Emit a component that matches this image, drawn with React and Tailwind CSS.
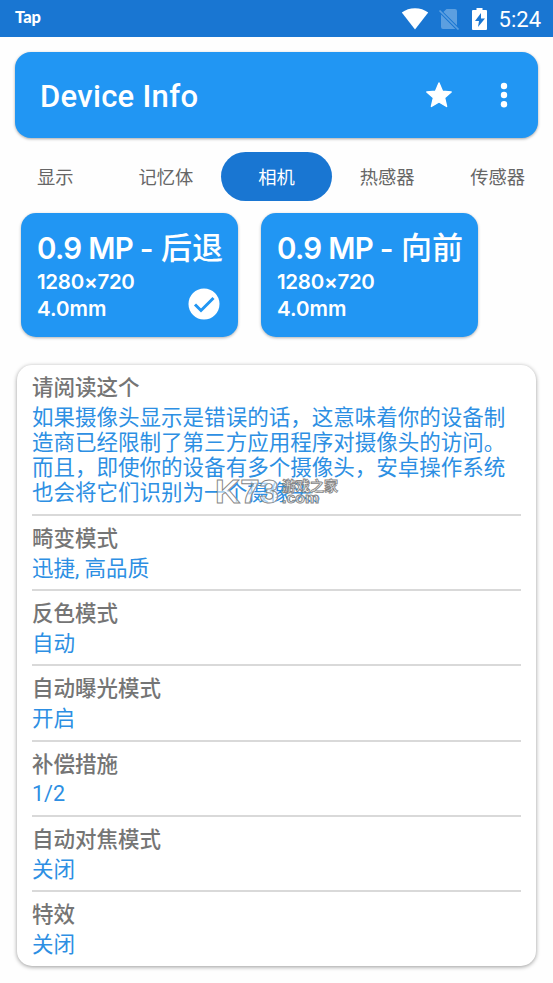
const tabs = ["显示", "记忆体", "相机", "热感器", "传感器"];

const cameras = [
  { id: 0, megapixels: "0.9 MP", facing: "后退", resolution: "1280×720", focal: "4.0mm" },
  { id: 1, megapixels: "0.9 MP", facing: "向前", resolution: "1280×720", focal: "4.0mm" },
];

const details = [
  {
    label: "请阅读这个",
    lines: [
      "如果摄像头显示是错误的话，这意味着你的设备制",
      "造商已经限制了第三方应用程序对摄像头的访问。",
      "而且，即使你的设备有多个摄像头，安卓操作系统",
      "也会将它们识别为一个摄像头。",
    ],
  },
  { label: "畸变模式", lines: ["迅捷, 高品质"] },
  { label: "反色模式", lines: ["自动"] },
  { label: "自动曝光模式", lines: ["开启"] },
  { label: "补偿措施", lines: ["1/2"] },
  { label: "自动对焦模式", lines: ["关闭"] },
  { label: "特效", lines: ["关闭"] },
];

const StatusBar = () => (
  <div className="flex h-[37px] items-center bg-[#1976d2] pl-[15px] pr-[12px] text-white">
    <svg width="27" height="18" viewBox="0 0 27 18" className="mt-px overflow-visible">
      <text x="0" y="13" textLength="26" lengthAdjust="spacingAndGlyphs" className="fill-white font-['Lato'] text-[16px] font-black">
        Tap
      </text>
    </svg>
    <div className="ml-auto flex items-center">
      <svg width="28" height="22" viewBox="0 0 28 22" fill="white">
        <path d="M.8 4.600C4.600 1.700 9 .2 14 .2s9.400 1.500 13.200 4.400L14 21.400z" />
      </svg>
      <svg width="22" height="24" viewBox="0 0 22 24" className="ml-[9px]">
        <path d="M8.500 2H17q2 0 2 2v14.600L5.400 5zM3 7.500 17.400 22H5q-2 0-2-2z" fill="#5c9fe0" />
        <path d="m1.500 3.500 19 19" stroke="#5c9fe0" strokeWidth="1.700" />
      </svg>
      <svg width="16" height="24" viewBox="0 0 16 24" className="ml-[12px]">
        <path d="M4.500 1h6v2H14q1 0 1 1v18q0 1-1 1H1q-1 0-1-1V4q0-1 1-1h3.500z" fill="white" />
        <path d="M9 6 3 14h4l-1 6 7-8.500H9z" fill="#1976d2" />
      </svg>
      <span className="ml-[11px] mt-[2px] text-[22px] leading-none">5:24</span>
    </div>
  </div>
);

const Header = () => (
  <header className="mx-[15px] mt-[15px] flex h-[86px] items-center rounded-[16px] bg-[#2196f3] pl-[25px] pr-[29px] text-white shadow-[0_1px_3px_rgba(0,0,0,0.35)]">
    <h1 className="mt-[3px] text-[31px] font-medium leading-none tracking-[0.3px]">Device Info</h1>
    <svg width="28" height="27" viewBox="0 0 28 27" className="-mt-[2px] ml-auto">
      <path
        d="m14 2 3.500 8.200 8.700.8-6.600 5.800 2 8.700L14 21l-7.600 4.500 2-8.700L1.800 11l8.700-.8z"
        fill="white"
        stroke="white"
        strokeWidth="1.400"
        strokeLinejoin="round"
      />
    </svg>
    <svg width="10" height="28" viewBox="0 0 10 28" fill="white" className="ml-[46px]">
      <circle cx="5" cy="5" r="3.200" />
      <circle cx="5" cy="14" r="3.200" />
      <circle cx="5" cy="23.300" r="3.200" />
    </svg>
  </header>
);

const CameraCard = ({ camera, selected }) => (
  <div className="flex h-[124px] w-[217px] shrink-0 rounded-[15px] bg-[#2196f3] pl-[16px] pr-[18px] pt-[16px] font-['Inter','Noto_Sans_CJK_SC',sans-serif] text-white shadow-[0_1px_3px_rgba(0,0,0,0.3)]">
    <div className="min-w-0 flex-1 whitespace-nowrap">
      <div className="flex h-[38px] items-center">
        <span className="w-[124px] shrink-0 text-[29.500px] font-semibold tracking-[-0.7px]">{camera.megapixels} -</span>
        <span className="text-[31px] font-medium">{camera.facing}</span>
      </div>
      <p className="mt-px text-[20.500px] font-semibold leading-[27px] tracking-[-0.3px]">{camera.resolution}</p>
      <p className="text-[20.500px] font-semibold leading-[27px]">{camera.focal}</p>
    </div>
    {selected && (
      <svg width="32" height="32" viewBox="0 0 32 32" className="-ml-[32px] mb-[17px] shrink-0 self-end">
        <circle cx="16" cy="16" r="15.500" fill="white" />
        <path d="m7 16.500 6 6L25.500 10" fill="none" stroke="#2196f3" strokeWidth="3" />
      </svg>
    )}
  </div>
);

// Outlined site mark stamped over the details card
const Watermark = () => (
  <svg
    width="128"
    height="32"
    viewBox="0 0 128 32"
    className="absolute left-[198px] top-[111px] overflow-visible"
    fill="white"
    fillOpacity="0.6"
    stroke="#858585"
    strokeWidth="0.9"
  >
    <text x="0" y="27" textLength="64" lengthAdjust="spacingAndGlyphs" className="font-['Liberation_Sans'] text-[33px] font-bold">
      K73
    </text>
    <text x="67" y="15" textLength="56" className="font-['Noto_Sans_CJK_SC'] text-[14px] font-bold">
      游戏之家
    </text>
    <text x="67" y="27" textLength="37" lengthAdjust="spacingAndGlyphs" className="font-['Liberation_Sans'] text-[14px] font-bold">
      .com
    </text>
  </svg>
);

export default function App() {
  return (
    <div className="h-[983px] w-[553px] overflow-hidden bg-[#fefefe] font-['Roboto','Noto_Sans_CJK_SC',sans-serif]">
      <StatusBar />
      <Header />

      <nav className="mt-[14px] flex h-[49px]">
        {tabs.map((tab) => (
          <div
            key={tab}
            className={`flex w-[110.600px] shrink-0 items-center justify-center rounded-full pt-[2px] text-[18.300px] ${
              tab === "相机" ? "bg-[#1976d2] text-white" : "text-[#666]"
            }`}
          >
            {tab}
          </div>
        ))}
      </nav>

      <div className="mt-[12px] flex gap-[23px] pl-[21px]">
        {cameras.map((camera) => (
          <CameraCard key={camera.id} camera={camera} selected={camera.id === 0} />
        ))}
      </div>

      <section className="relative mx-[17px] mt-[28px] h-[601px] rounded-[15px] bg-white px-[15px] pt-[0.200px] shadow-[0_1px_4px_rgba(0,0,0,0.4)]">
        <div>
          {details.map((item) => (
            <div key={item.label} className="border-b-2 border-[#d9d9d9] pb-[8.400px] pt-[8px] last:border-b-0">
              <h2 className="h-[31.800px] text-[21.530px] font-medium leading-[30px] text-[#757575]">{item.label}</h2>
              {item.lines.map((line) => (
                <p key={line} className="whitespace-nowrap text-[21.530px] leading-[25.100px] text-[#2d8fe3]">
                  {line}
                </p>
              ))}
            </div>
          ))}
        </div>
        <Watermark />
      </section>
    </div>
  );
}
